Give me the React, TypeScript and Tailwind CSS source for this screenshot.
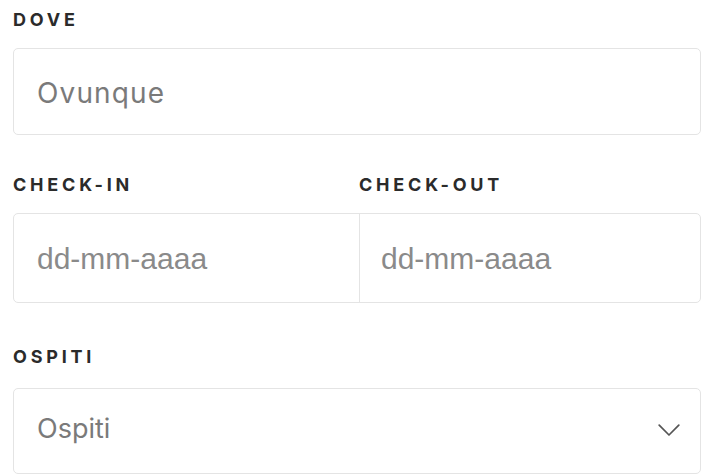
function Label({ children }: { children: string }) {
  return (
    <div className="h-6 flex items-center font-['Inter',sans-serif] font-bold text-[18px] tracking-[0.21em] text-[#2b2b2b]">
      {children}
    </div>
  )
}

export default function App() {
  return (
    <div className="w-[714px] h-[476px] bg-white px-[13px] pt-[7px] overflow-hidden">
      <Label>DOVE</Label>
      <div className="mt-[17px] h-[87px] rounded-[5px] border border-[#e4e4e4] flex items-center px-[23px] pt-[2px]">
        <span className="font-['Inter',sans-serif] text-[28px] tracking-[0.04em] text-[#7a7a7a]">Ovunque</span>
      </div>

      <div className="mt-[37px] grid grid-cols-[346px_1fr]">
        <Label>CHECK-IN</Label>
        <Label>CHECK-OUT</Label>
      </div>
      <div className="mt-[17px] h-[90px] rounded-[5px] border border-[#e4e4e4] grid grid-cols-[346px_1fr]">
        <div className="border-r border-[#e4e4e4] flex items-center px-[23px]">
          <span className="font-['Liberation_Sans',sans-serif] text-[30px] text-[#8a8a8a]">dd-mm-aaaa</span>
        </div>
        <div className="flex items-center px-[21px]">
          <span className="font-['Liberation_Sans',sans-serif] text-[30px] text-[#8a8a8a]">dd-mm-aaaa</span>
        </div>
      </div>

      <div className="mt-[41px]">
        <Label>OSPITI</Label>
      </div>
      <div className="mt-[20px] h-[86px] rounded-[5px] border border-[#e4e4e4] flex items-center justify-between pl-[23px] pr-[20px] pb-[4px]">
        <span className="font-['Inter',sans-serif] text-[27px] text-[#7a7a7a]">Ospiti</span>
        <svg width="22" height="13" viewBox="0 0 22 13" fill="none" className="mt-[2px]">
          <polyline points="1.2,1.2 11,11 20.8,1.2" stroke="#555" strokeWidth="1.7" strokeLinecap="round" strokeLinejoin="round" />
        </svg>
      </div>
    </div>
  )
}
